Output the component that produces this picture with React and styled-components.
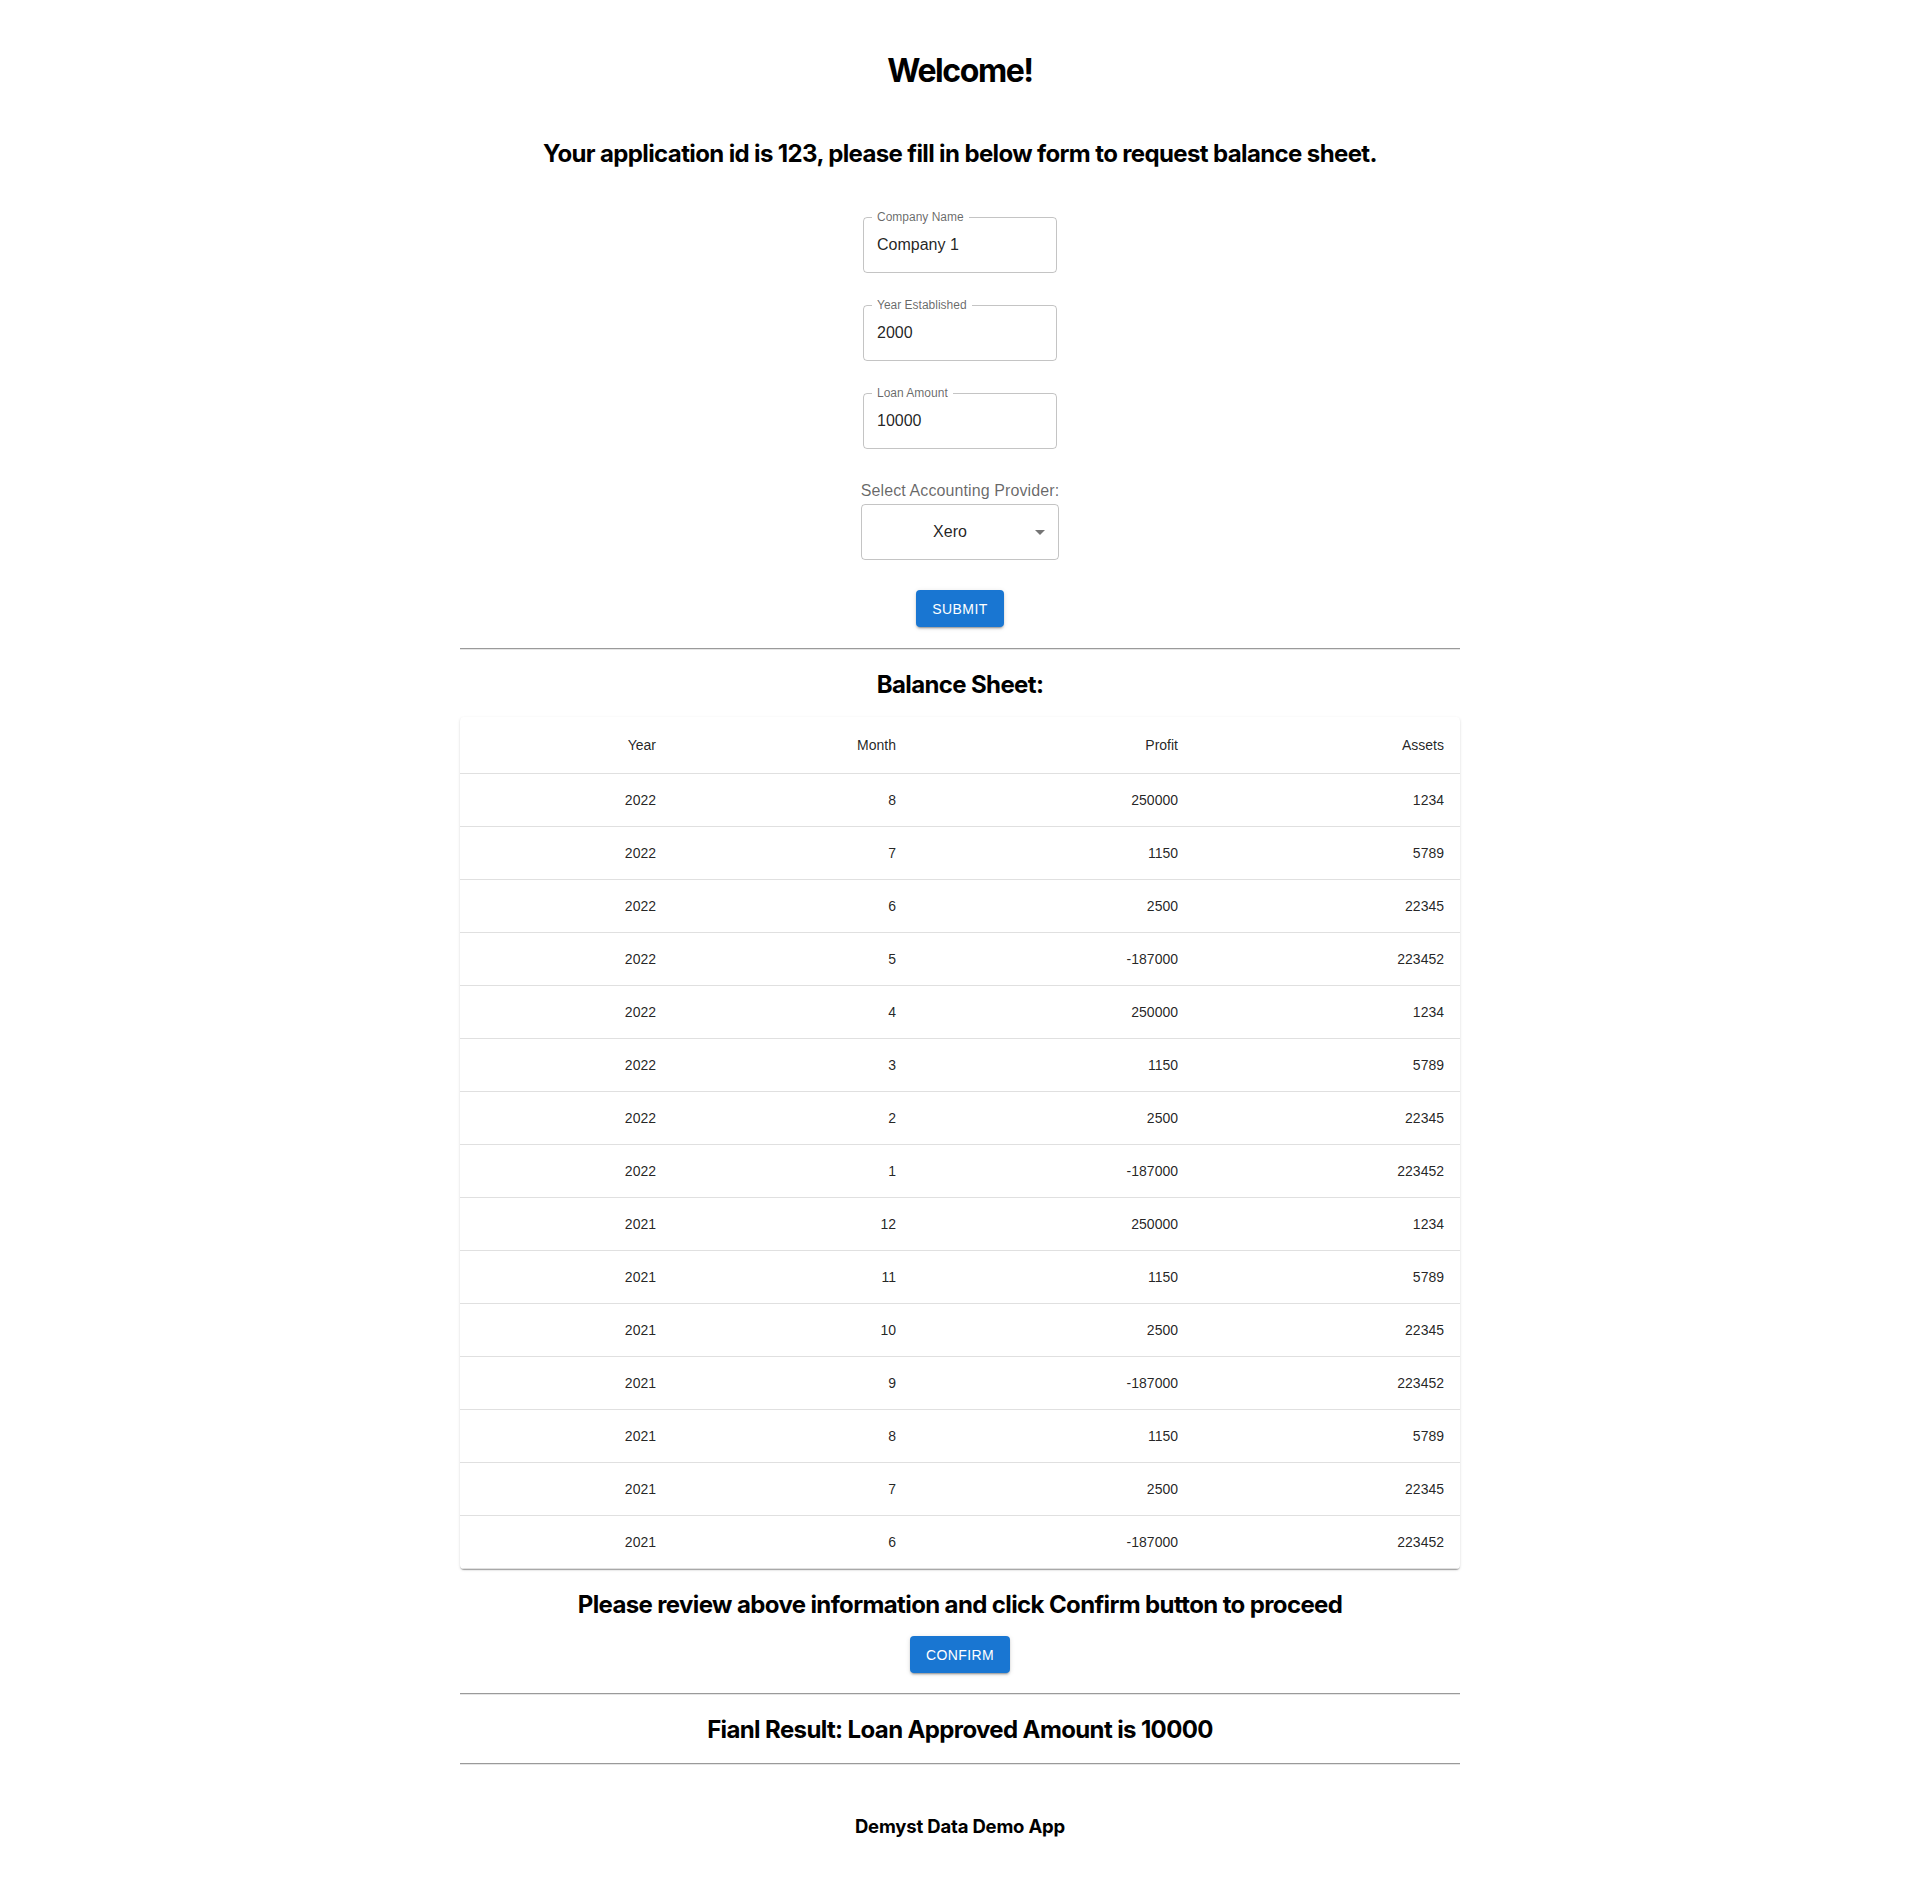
import styled, { createGlobalStyle } from 'styled-components'

const GlobalStyle = createGlobalStyle`
	body {
		margin: 0;
		background: #fff;
		font-family: 'Liberation Sans', Arial, sans-serif;
		color: rgba(0, 0, 0, 0.87);
	}
`

const rows = [
	[2022, 8, 250000, 1234],
	[2022, 7, 1150, 5789],
	[2022, 6, 2500, 22345],
	[2022, 5, -187000, 223452],
	[2022, 4, 250000, 1234],
	[2022, 3, 1150, 5789],
	[2022, 2, 2500, 22345],
	[2022, 1, -187000, 223452],
	[2021, 12, 250000, 1234],
	[2021, 11, 1150, 5789],
	[2021, 10, 2500, 22345],
	[2021, 9, -187000, 223452],
	[2021, 8, 1150, 5789],
	[2021, 7, 2500, 22345],
	[2021, 6, -187000, 223452],
]

const columns = [
	{ title: 'Year', width: 212 },
	{ title: 'Month', width: 240 },
	{ title: 'Profit', width: 282 },
	{ title: 'Assets', width: 266 },
]

const Page = styled.main`
	width: 1000px;
	margin: 0 auto;
	padding: 51px 0 49px;
	display: flex;
	flex-direction: column;
	align-items: center;
`

const Title = styled.h1`
	margin: 0;
	font-family: Inter, 'Liberation Sans', sans-serif;
	font-size: 32px;
	line-height: 40px;
	font-weight: 700;
	color: #000;
	letter-spacing: -0.045em;
`

const Heading = styled.h2`
	margin: ${(p) => p.$top || 0}px 0 0;
	font-family: Inter, 'Liberation Sans', sans-serif;
	font-size: 24px;
	line-height: 32px;
	font-weight: 700;
	color: #000;
	letter-spacing: -0.026em;
	text-align: center;
`

const Form = styled.form`
	margin-top: 47px;
	display: flex;
	flex-direction: column;
	align-items: center;
	gap: 32px;
`

const Field = styled.div`
	position: relative;
	width: 194px;
	height: 56px;
	box-sizing: border-box;
	border: 1px solid rgba(0, 0, 0, 0.23);
	border-radius: 4px;
	display: flex;
	align-items: center;
`

const FieldLabel = styled.label`
	position: absolute;
	top: -8px;
	left: 8px;
	padding: 0 5px;
	background: #fff;
	font-size: 12px;
	line-height: 14px;
	color: rgba(0, 0, 0, 0.6);
`

const Input = styled.input`
	width: 100%;
	border: 0;
	outline: none;
	background: transparent;
	padding: 0 13px;
	font-family: inherit;
	font-size: 16px;
	color: rgba(0, 0, 0, 0.87);
`

const Provider = styled.div`
	margin-top: 30px;
	display: flex;
	flex-direction: column;
	align-items: center;
`

const ProviderLabel = styled.div`
	font-size: 16px;
	line-height: 24px;
	letter-spacing: 0.1px;
	color: rgba(0, 0, 0, 0.6);
`

const SelectBox = styled.div`
	position: relative;
	margin-top: 1px;
	width: 198px;
	height: 56px;
	box-sizing: border-box;
	border: 1px solid rgba(0, 0, 0, 0.23);
	border-radius: 4px;
	display: flex;
	align-items: center;
	justify-content: center;
	padding-right: 20px;
	font-size: 16px;
	color: rgba(0, 0, 0, 0.87);
`

const Arrow = styled.svg`
	position: absolute;
	right: 6px;
	top: 50%;
	margin-top: -12px;
	width: 24px;
	height: 24px;
	fill: rgba(0, 0, 0, 0.54);
`

const Button = styled.button`
	margin-top: ${(p) => p.$top}px;
	min-width: 64px;
	padding: 0 16px;
	height: 37px;
	border: 0;
	border-radius: 4px;
	background: #1976d2;
	color: #fff;
	font-family: 'Liberation Sans', Arial, sans-serif;
	font-size: 14px;
	font-weight: 500;
	letter-spacing: 0.4px;
	text-transform: uppercase;
	box-shadow: 0px 3px 1px -2px rgba(0, 0, 0, 0.2), 0px 2px 2px 0px rgba(0, 0, 0, 0.14),
		0px 1px 5px 0px rgba(0, 0, 0, 0.12);
	cursor: pointer;
`

const Divider = styled.hr`
	align-self: stretch;
	margin: ${(p) => p.$top}px 0 0;
	height: 0;
	border: 0;
	border-top: 1px solid #9a9a9a;
	border-bottom: 1px solid #e6e6e6;
`

const Paper = styled.div`
	align-self: stretch;
	margin-top: 16px;
	background: #fff;
	border-radius: 4px;
	overflow: hidden;
	box-shadow: 0px 2px 1px -1px rgba(0, 0, 0, 0.2), 0px 1px 1px 0px rgba(0, 0, 0, 0.14),
		0px 1px 3px 0px rgba(0, 0, 0, 0.12);
`

const Table = styled.table`
	width: 100%;
	table-layout: fixed;
	border-collapse: collapse;
	font-size: 14px;
`

const HeadCell = styled.th`
	padding: 16px;
	text-align: right;
	font-weight: 400;
	line-height: 24px;
	border-bottom: 1px solid rgb(224, 224, 224);
	color: rgba(0, 0, 0, 0.87);
`

const Cell = styled.td`
	padding: 16px;
	text-align: right;
	line-height: 20px;
	border-bottom: 1px solid rgb(224, 224, 224);
	color: rgba(0, 0, 0, 0.87);
`

const Footer = styled.h3`
	margin: 49px 0 0;
	font-family: Inter, 'Liberation Sans', sans-serif;
	font-size: 18.5px;
	line-height: 24px;
	font-weight: 700;
	color: #000;
	letter-spacing: -0.01em;
`

const TextField = ({ label, value }) => (
	<Field>
		<FieldLabel>{label}</FieldLabel>
		<Input defaultValue={value} />
	</Field>
)

export default function App() {
	return (
		<>
			<GlobalStyle />
			<Page>
				<Title>Welcome!</Title>
				<Heading $top={47}>
					Your application id is 123, please fill in below form to request balance sheet.
				</Heading>

				<Form onSubmit={(e) => e.preventDefault()}>
					<TextField label='Company Name' value='Company 1' />
					<TextField label='Year Established' value='2000' />
					<TextField label='Loan Amount' value='10000' />
				</Form>

				<Provider>
					<ProviderLabel>Select Accounting Provider:</ProviderLabel>
					<SelectBox>
						Xero
						<Arrow viewBox='0 0 24 24'>
							<path d='M7 10l5 5 5-5z' />
						</Arrow>
					</SelectBox>
				</Provider>

				<Button $top={30}>Submit</Button>

				<Divider $top={21} />
				<Heading $top={19}>Balance Sheet:</Heading>

				<Paper>
					<Table>
						<colgroup>
							{columns.map((c) => (
								<col key={c.title} style={{ width: c.width }} />
							))}
						</colgroup>
						<thead>
							<tr>
								{columns.map((c) => (
									<HeadCell key={c.title}>{c.title}</HeadCell>
								))}
							</tr>
						</thead>
						<tbody>
							{rows.map((r, i) => (
								<tr key={i}>
									{r.map((v, j) => (
										<Cell key={j}>{v}</Cell>
									))}
								</tr>
							))}
						</tbody>
					</Table>
				</Paper>

				<Heading $top={20}>Please review above information and click Confirm button to proceed</Heading>
				<Button $top={15}>Confirm</Button>

				<Divider $top={20} />
				<Heading $top={19}>Fianl Result: Loan Approved Amount is 10000</Heading>
				<Divider $top={17} />

				<Footer>Demyst Data Demo App</Footer>
			</Page>
		</>
	)
}
